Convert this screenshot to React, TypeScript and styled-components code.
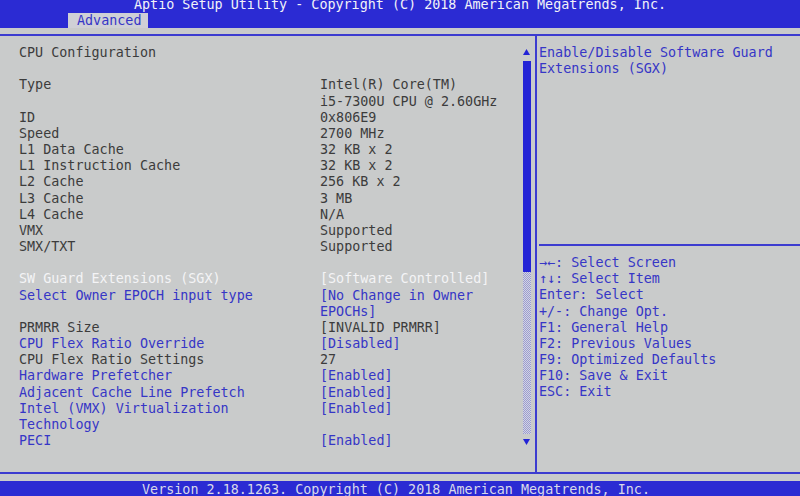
import React from "react";
import styled, { createGlobalStyle } from "styled-components";

const Global = createGlobalStyle`
  html, body { margin: 0; padding: 0; background: #c9cbcb; }
  body { width: 800px; height: 496px; overflow: hidden; }
  * { box-sizing: border-box; }
`;

const BLUE = "#2b2bd3";
const LINE = "#3c3cd0";
const TEXT = "#3c3c3c";
const BLUE_TEXT = "#3636c6";

const Screen = styled.div`
  width: 800px;
  height: 496px;
  display: flex;
  flex-direction: column;
  background: #c9cbcb;
  font-family: "DejaVu Sans Mono", "Liberation Mono", monospace;
  font-size: 13.4px;
  color: ${TEXT};
  overflow: hidden;
`;

const Header = styled.div`
  height: 28px;
  background: ${BLUE};
  display: flex;
  flex-direction: column;
  justify-content: space-between;
`;

const Title = styled.div`
  margin-top: -3px;
  height: 15px;
  line-height: 15px;
  text-align: center;
  color: #f2f2f8;
`;

const TabBar = styled.div`
  display: flex;
  padding-left: 68px;
`;

const Tab = styled.div`
  width: 80px;
  height: 15px;
  line-height: 15px;
  padding-left: 9px;
  background: #cfd0d6;
  color: ${BLUE_TEXT};
`;

const Main = styled.div`
  margin-top: 6px;
  height: 440px;
  border-top: 2px solid ${LINE};
  border-bottom: 2px solid ${LINE};
  display: flex;
`;

const LeftPanel = styled.div`
  width: 522px;
  padding: 9px 0 0 19px;
  line-height: 16.17px;
`;

const Row = styled.div`
  display: grid;
  grid-template-columns: 301px 1fr;
  min-height: 16.17px;
`;

const Cell = styled.div<{ $tone: "dark" | "blue" | "white" }>`
  white-space: pre;
  color: ${(p) =>
    p.$tone === "blue" ? BLUE_TEXT : p.$tone === "white" ? "#f4f4f6" : TEXT};
`;

const ScrollCol = styled.div`
  width: 9px;
  display: flex;
  flex-direction: column;
  align-items: center;
  padding-top: 13px;
`;

const Arrow = styled.svg`
  display: block;
  width: 7px;
  height: 6px;
  flex: none;
`;

const Thumb = styled.div`
  margin-top: 6px;
  width: 8px;
  height: 211px;
  background: #2323d6;
`;

const Track = styled.div`
  width: 8px;
  height: 162px;
  background: repeating-conic-gradient(#9a9ad2 0 25%, #d4d6e0 0 50%) 0 0 / 2px 2px;
`;

const DownWrap = styled.div`
  margin-top: 5px;
`;

const RightPanel = styled.div`
  margin-left: 4px;
  flex: 1;
  border-left: 2px solid ${LINE};
  display: flex;
  flex-direction: column;
  color: ${BLUE_TEXT};
  line-height: 16.17px;
`;

const HelpTop = styled.div`
  height: 208px;
  padding: 9px 0 0 2px;
  white-space: pre;
`;

const Divider = styled.div`
  margin-left: 2px;
  height: 2px;
  background: ${LINE};
`;

const KeyHelp = styled.div`
  padding: 9px 0 0 2px;
  white-space: pre;
`;

const Footer = styled.div`
  margin-top: 7px;
  height: 15px;
  background: ${BLUE};
  color: #d8d9ea;
  text-align: center;
  line-height: 17px;
  padding-right: 8px;
  overflow: hidden;
`;

type Tone = "dark" | "blue" | "white";
type RowData = { label: string; value: string; tone?: Tone; vtone?: Tone };

const rows: RowData[] = [
  { label: "CPU Configuration", value: "" },
  { label: "", value: "" },
  { label: "Type", value: "Intel(R) Core(TM)\ni5-7300U CPU @ 2.60GHz" },
  { label: "ID", value: "0x806E9" },
  { label: "Speed", value: "2700 MHz" },
  { label: "L1 Data Cache", value: "32 KB x 2" },
  { label: "L1 Instruction Cache", value: "32 KB x 2" },
  { label: "L2 Cache", value: "256 KB x 2" },
  { label: "L3 Cache", value: "3 MB" },
  { label: "L4 Cache", value: "N/A" },
  { label: "VMX", value: "Supported" },
  { label: "SMX/TXT", value: "Supported" },
  { label: "", value: "" },
  { label: "SW Guard Extensions (SGX)", value: "[Software Controlled]", tone: "white", vtone: "white" },
  { label: "Select Owner EPOCH input type", value: "[No Change in Owner\nEPOCHs]", tone: "blue", vtone: "blue" },
  { label: "PRMRR Size", value: "[INVALID PRMRR]" },
  { label: "CPU Flex Ratio Override", value: "[Disabled]", tone: "blue", vtone: "blue" },
  { label: "CPU Flex Ratio Settings", value: "27" },
  { label: "Hardware Prefetcher", value: "[Enabled]", tone: "blue", vtone: "blue" },
  { label: "Adjacent Cache Line Prefetch", value: "[Enabled]", tone: "blue", vtone: "blue" },
  { label: "Intel (VMX) Virtualization\nTechnology", value: "[Enabled]", tone: "blue", vtone: "blue" },
  { label: "PECI", value: "[Enabled]", tone: "blue", vtone: "blue" },
];

const keyHelp = [
  "→←: Select Screen",
  "↑↓: Select Item",
  "Enter: Select",
  "+/-: Change Opt.",
  "F1: General Help",
  "F2: Previous Values",
  "F9: Optimized Defaults",
  "F10: Save & Exit",
  "ESC: Exit",
].join("\n");

export default function App() {
  return (
    <Screen>
      <Global />
      <Header>
        <Title>Aptio Setup Utility - Copyright (C) 2018 American Megatrends, Inc.</Title>
        <TabBar>
          <Tab>Advanced</Tab>
        </TabBar>
      </Header>
      <Main>
        <LeftPanel>
          {rows.map((r, i) => (
            <Row key={i}>
              <Cell $tone={r.tone ?? "dark"}>{r.label}</Cell>
              <Cell $tone={r.vtone ?? "dark"}>{r.value}</Cell>
            </Row>
          ))}
        </LeftPanel>
        <ScrollCol>
          <Arrow viewBox="0 0 7 6">
            <polygon points="3.5,0 7,6 0,6" fill="#2323d6" />
          </Arrow>
          <Thumb />
          <Track />
          <DownWrap>
            <Arrow viewBox="0 0 7 6">
              <polygon points="0,0 7,0 3.5,6" fill="#2323d6" />
            </Arrow>
          </DownWrap>
        </ScrollCol>
        <RightPanel>
          <HelpTop>{"Enable/Disable Software Guard\nExtensions (SGX)"}</HelpTop>
          <Divider />
          <KeyHelp>{keyHelp}</KeyHelp>
        </RightPanel>
      </Main>
      <Footer>Version 2.18.1263. Copyright (C) 2018 American Megatrends, Inc.</Footer>
    </Screen>
  );
}
